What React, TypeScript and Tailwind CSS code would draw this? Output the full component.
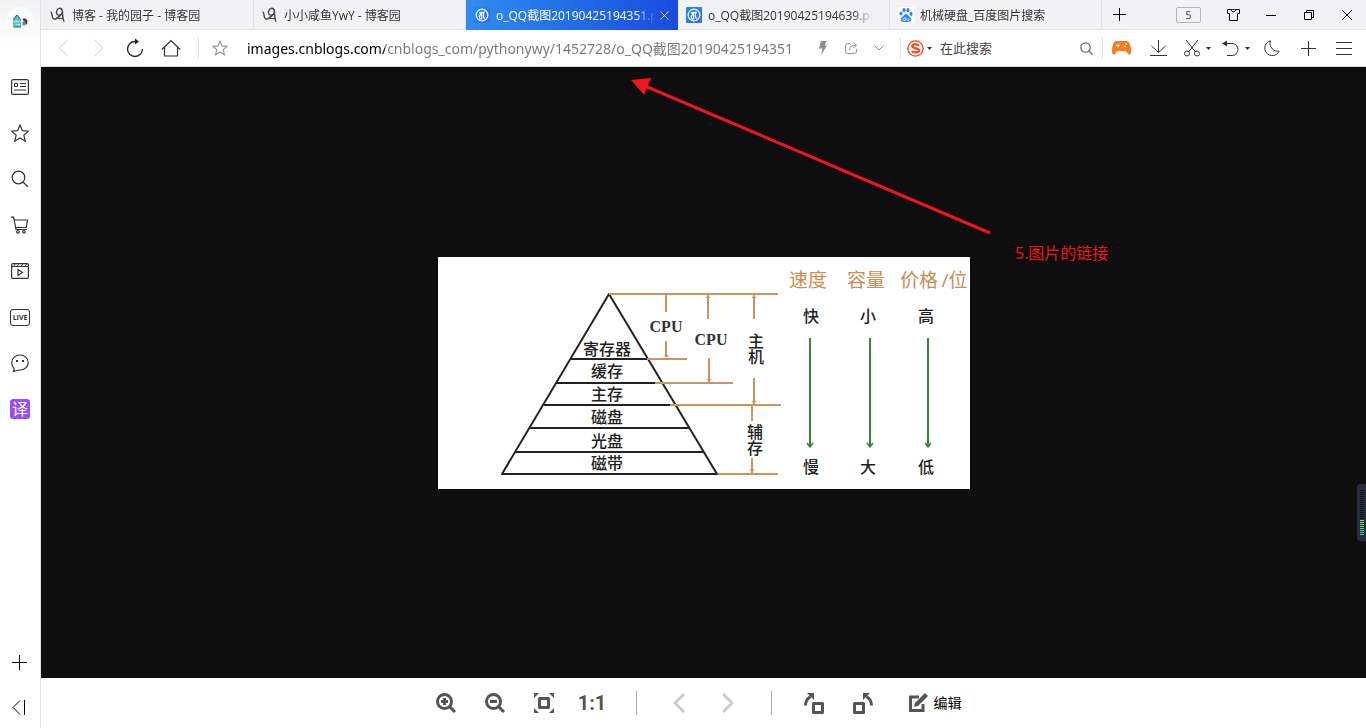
import { useState } from 'react'
import type { ReactNode } from 'react'

type IconProps = {
  w?: number
  h?: number
  sw?: number
  className?: string
  children: ReactNode
}

function Icon({ w = 20, h = 20, sw = 1, className = '', children }: IconProps) {
  return (
    <svg
      width={w}
      height={h}
      viewBox={`0 0 ${w} ${h}`}
      fill="none"
      stroke="currentColor"
      strokeWidth={sw}
      className={`shrink-0 ${className}`}
      aria-hidden="true"
    >
      {children}
    </svg>
  )
}

// Favicons

function CnblogsIcon() {
  return (
    <Icon w={16} h={16} sw={1.5} className="text-[#4a4a4a]">
      <path d="M0.500 5c1 0 1.200 1 1.500 3 .4 2.500 1 4.200 2.700 4.200C6.500 12.200 9 9.500 11.800 7" />
      <path d="M12.300 4.500c0 2-1.400 3.700-3.200 3.700S6.300 7 6.500 5.200 8 1.200 9.800 1.200s2.500 1.300 2.600 3.300c.1 3.500.3 7 1.600 10.200" />
      <path d="M7.500 11.500h5.300" strokeWidth={1.200} />
    </Icon>
  )
}

function ImageTabIcon() {
  return (
    <Icon w={16} h={16} className="text-white">
      <rect width="16" height="16" rx="1" fill="#1a86f7" stroke="none" />
      <path d="M16 0v16H0z" fill="#3d63f2" stroke="none" opacity=".6" />
      <circle cx="8" cy="8" r="5.800" strokeWidth={1.300} />
      <path d="M5 5.800l6-.6M8.500 5.500L5.800 8.500M9.500 5.500v3c0 1.500.3 3 1.200 3.500M5.500 8.200v2.500c0 1 .8 1.500 2.200 1V7.500" strokeWidth={1.200} />
    </Icon>
  )
}

function BaiduIcon() {
  return (
    <Icon w={16} h={16} className="text-[#2f86f6]">
      <rect width="16" height="16" fill="#ffffff" stroke="none" />
      <g fill="currentColor" stroke="none">
        <ellipse cx="3" cy="6.500" rx="1.600" ry="2.100" />
        <ellipse cx="6" cy="3.200" rx="1.600" ry="2.100" />
        <ellipse cx="10" cy="3.200" rx="1.600" ry="2.100" />
        <ellipse cx="13" cy="6.800" rx="1.600" ry="2.100" />
        <path d="M8 7c1.800 0 2.300 1.700 3.500 2.800 1.300 1.200 2.200 2.300 1.500 3.900-.7 1.500-2.700 1.300-5 1.300s-4.300.2-5-1.300c-.7-1.600.2-2.700 1.500-3.900C5.700 8.700 6.200 7 8 7z" />
      </g>
      <path d="M7.300 10v3.500H6a1.100 1.100 0 010-2.200h1.300M8.800 11.300v1.300c0 .6.400.9.900.9h1.200v-2.200" stroke="#ffffff" strokeWidth={0.700} />
    </Icon>
  )
}

const TABS = [
  { title: '博客 - 我的园子 - 博客园', icon: <CnblogsIcon />, active: false },
  { title: '小小咸鱼YwY - 博客园', icon: <CnblogsIcon />, active: false },
  { title: 'o_QQ截图20190425194351.png', icon: <ImageTabIcon />, active: true },
  { title: 'o_QQ截图20190425194639.png', icon: <ImageTabIcon />, active: false },
  { title: '机械硬盘_百度图片搜索', icon: <BaiduIcon />, active: false },
]

function Caret() {
  return (
    <Icon w={5} h={3}>
      <path d="M0 0h5L2.500 3z" fill="currentColor" stroke="none" />
    </Icon>
  )
}

function TabBar() {
  return (
    <div className="flex h-[30px] border-b border-[#e2e2e5] bg-[#f2f2f5] pl-px">
      {TABS.map((tab) => (
        <div
          key={tab.title}
          className={
            tab.active
              ? '-mb-px flex w-[212px] items-center bg-linear-to-r from-[#338bee] to-[#1b4ae0] pr-[9px] pl-2 text-white'
              : 'flex w-[212px] items-center border-r border-[#e2e2e5] pr-4 pl-2 text-[#333333]'
          }
        >
          <a href="#" className="flex min-w-0 flex-1 items-center gap-1.5">
            {tab.icon}
            <span className="flex-1 overflow-hidden pt-0.5 text-xs leading-5 whitespace-nowrap [mask-image:linear-gradient(to_right,black_calc(100%-20px),transparent)]">
              {tab.title}
            </span>
          </a>
          {tab.active && (
            <button aria-label="关闭标签" className="ml-1 flex h-4 w-[9px] items-center justify-center">
              <Icon w={9} h={9}>
                <path d="M.5.500l8 8M8.500.500l-8 8" />
              </Icon>
            </button>
          )}
        </div>
      ))}
      <button aria-label="新建标签" className="flex w-[35px] items-center justify-center text-black">
        <Icon w={13} h={13}>
          <path d="M6.500 0v13M0 6.500h13" />
        </Icon>
      </button>
      <div className="ml-auto flex items-center text-black">
        <button className="mr-[13px] flex h-4 w-[25px] items-center justify-center rounded-xs border border-[#b5b5b8] text-[11px] leading-4 text-[#444444]">
          5
        </button>
        <button aria-label="皮肤" className="flex h-full w-[38px] items-center justify-center">
          <Icon w={13} h={12}>
            <path d="M.5.500h3.500c.2 1.400 1.100 2.200 2.500 2.200S8.800 1.900 9 .5h3.500v4h-2v7h-8v-7h-2z" />
            <path d="M4 .5h5" strokeWidth={0.800} />
          </Icon>
        </button>
        <button aria-label="最小化" className="flex h-full w-[38px] items-center justify-center">
          <Icon w={10} h={2}>
            <path d="M0 1.500h10" />
          </Icon>
        </button>
        <button aria-label="还原" className="flex h-full w-[38px] items-center justify-center">
          <Icon w={10} h={10}>
            <path d="M.5 2.500h7v7h-7zM2.500 2.500v-2h7v7h-2" />
          </Icon>
        </button>
        <button aria-label="关闭" className="flex h-full w-[38px] items-center justify-center">
          <Icon w={10} h={10}>
            <path d="M0 0l10 10M10 0L0 10" />
          </Icon>
        </button>
      </div>
    </div>
  )
}

function AddressBar() {
  const [url, setUrl] = useState(
    'images.cnblogs.com/cnblogs_com/pythonywy/1452728/o_QQ截图20190425194351'
  )

  return (
    <div className="flex h-[37px] items-center border-b border-[#d9dcdd] bg-white pr-1 pl-1 text-[#333333]">
      <button aria-label="后退" className="flex h-full w-9 items-center justify-center text-[#cfcfcf]">
        <Icon w={10} h={18}>
          <path d="M9.500 1L1 9l8.500 8" />
        </Icon>
      </button>
      <button aria-label="前进" className="flex h-full w-9 items-center justify-center text-[#cfcfcf]">
        <Icon w={10} h={18}>
          <path d="M.5 1L9 9 .5 17" />
        </Icon>
      </button>
      <button aria-label="刷新" className="flex h-full w-9 items-center justify-center text-[#222222]">
        <Icon w={18} h={20} sw={1.300}>
          <path d="M11 3.500H9a7.500 7.500 0 107.500 7.500" />
          <path d="M9 .5l4 3L9 6.500z" fill="currentColor" stroke="none" />
        </Icon>
      </button>
      <button aria-label="主页" className="flex h-full w-9 items-center justify-center">
        <Icon w={20} h={18} sw={1.200}>
          <path d="M.8 10.500L10 1.500l9.200 9M3.500 8.500v8.500h13V8.500" />
        </Icon>
      </button>
      <span className="ml-[9px] h-[22px] w-px bg-[#e0e0e0]" />
      <button aria-label="收藏" className="flex h-full w-[42px] items-center justify-center text-[#999999]">
        <Icon w={16} h={16} sw={1.200}>
          <path d="M8 1.200l2 4.700 5 .4-3.800 3.400 1.200 5L8 12l-4.400 2.700 1.200-5L1 6.300l5-.4z" />
        </Icon>
      </button>
      <input
        aria-label="地址"
        value={url}
        onChange={(e) => setUrl(e.target.value)}
        className="h-[30px] min-w-0 flex-1 bg-linear-to-r from-black from-[144px] to-[#777777] to-[144px] bg-clip-text px-1.5 font-['Noto_Sans','Noto_Sans_CJK_SC',sans-serif] text-sm leading-5 text-[#777777] outline-none [-webkit-text-fill-color:transparent]"
      />
      <button aria-label="极速模式" className="flex h-full w-7 items-center justify-center text-[#8f8f8f]">
        <Icon w={8} h={14}>
          <path d="M2 0h5.500L5.800 4.500H8L2.200 14l1.200-6.500H0z" fill="currentColor" stroke="none" />
        </Icon>
      </button>
      <button aria-label="分享" className="flex h-full w-7 items-center justify-center text-[#8f8f8f]">
        <Icon w={12} h={12}>
          <path d="M5 1.500H2.500a2 2 0 00-2 2v6a2 2 0 002 2h7a2 2 0 002-2V7M4.500 8c.3-3 2-4.700 6.500-4.700M8.500.500l3 2.800-3 2.700" />
        </Icon>
      </button>
      <button aria-label="更多" className="flex h-full w-7 items-center justify-center text-[#8f8f8f]">
        <Icon w={10} h={6}>
          <path d="M.5.500L5 5 9.500.500" />
        </Icon>
      </button>
      <span className="ml-[7px] h-[22px] w-px bg-[#e0e0e0]" />
      <div className="flex h-full w-[201px] items-center pr-[9px] pl-1.5">
        <button aria-label="切换搜索引擎" className="flex h-full items-center gap-[3px]">
          <Icon w={17} h={17} className="text-[#f4481d]">
            <circle cx="8.500" cy="8.500" r="7.600" strokeWidth={1.400} />
            <path d="M12.200 5.300C9.500 4 5.200 4 5.200 6.300c0 2.500 6.800 1.700 6.800 4.300 0 2.300-4.500 2.300-7.300.9" strokeWidth={2.200} />
          </Icon>
          <Caret />
        </button>
        <input
          aria-label="搜索"
          placeholder="在此搜索"
          className="ml-2 min-w-0 flex-1 text-[13px] leading-5 outline-none placeholder:text-[#444444]"
        />
        <button aria-label="搜索" className="flex h-full items-center text-[#666666]">
          <Icon w={13} h={13} sw={1.200}>
            <circle cx="5.500" cy="5.500" r="4.700" />
            <path d="M9 9l3.600 3.600" />
          </Icon>
        </button>
      </div>
      <span className="h-[22px] w-px bg-[#e0e0e0]" />
      <button aria-label="游戏" className="flex h-full w-[37px] items-center justify-center">
        <Icon w={19} h={14}>
          <path
            d="M5 0h9c3 0 4.200 2.500 4.800 7 .4 3.500.4 6.500-1.500 6.500-2 0-2.300-3.500-4.300-3.500H6c-2 0-2.300 3.500-4.300 3.500C-.200 13.500-.200 10.500.200 7 .800 2.500 2 0 5 0z"
            fill="#fa7a21"
            stroke="none"
          />
          <path d="M6 2.500v4M4 4.500h4" stroke="#ffffff" />
          <path d="M12 5.500h1.500M13.500 3H15" stroke="#ffffff" strokeWidth={1.500} />
        </Icon>
      </button>
      <button aria-label="下载" className="flex h-full w-[37px] items-center justify-center">
        <Icon w={17} h={16}>
          <path d="M8.500 0v12.500M1.500 6l7 6.500 7-6.500M0 15.500h17" />
        </Icon>
      </button>
      <button aria-label="截图" className="flex h-full w-[41px] items-center justify-center gap-1.5">
        <Icon w={16} h={17}>
          <path d="M2 0l9.500 12M14 0L4.500 12" />
          <circle cx="3" cy="13.500" r="2.500" />
          <circle cx="13" cy="13.500" r="2.500" />
        </Icon>
        <Caret />
      </button>
      <button aria-label="撤销" className="flex h-full w-9 items-center justify-center gap-1.5">
        <Icon w={17} h={16}>
          <path d="M2 3.500h8a6 6 0 010 12H5" />
          <path d="M0 3.500L5 .5v6z" fill="currentColor" stroke="none" />
        </Icon>
        <Caret />
      </button>
      <button aria-label="夜间模式" className="flex h-full w-9 items-center justify-center">
        <Icon w={16} h={16}>
          <path d="M6.500.800a7.500 7.500 0 108.600 10.300A7.800 7.800 0 016.500.800z" />
        </Icon>
      </button>
      <button aria-label="添加" className="flex h-full w-9 items-center justify-center">
        <Icon w={15} h={15}>
          <path d="M7.500 0v15M0 7.500h15" />
        </Icon>
      </button>
      <button aria-label="菜单" className="flex h-full w-9 items-center justify-center">
        <Icon w={16} h={13}>
          <path d="M0 .5h16M0 6.500h16M0 12.500h16" />
        </Icon>
      </button>
    </div>
  )
}

const SIDE_ITEMS = [
  {
    label: '资讯',
    icon: (
      <Icon w={18} h={16} sw={1.200}>
        <rect x=".6" y=".6" width="16.800" height="14.800" rx="1.500" />
        <path d="M3.500 4.500h3v3h-3zM9 4.500h6M9 7.500h6M3 11h12" strokeWidth={1} />
      </Icon>
    ),
  },
  {
    label: '收藏夹',
    icon: (
      <Icon w={18} h={18} sw={1.200}>
        <path d="M9 1l2.400 5.700 6.100.5-4.700 4 1.500 6L9 13.900l-5.300 3.300 1.500-6-4.700-4 6.100-.5z" />
      </Icon>
    ),
  },
  {
    label: '搜索',
    icon: (
      <Icon w={18} h={18} sw={1.200}>
        <circle cx="7.500" cy="7.500" r="6.300" />
        <path d="M12 12l5 5" />
      </Icon>
    ),
  },
  {
    label: '购物',
    icon: (
      <Icon w={18} h={18} sw={1.200}>
        <path d="M0 1.200h2.600L5 13.500h11M3.500 4h13l-1.200 7.500H5" />
        <circle cx="7" cy="15.800" r="1.300" />
        <circle cx="13" cy="15.800" r="1.300" />
      </Icon>
    ),
  },
  {
    label: '视频',
    icon: (
      <Icon w={18} h={16} sw={1.200}>
        <rect x=".6" y=".6" width="16.800" height="14.800" rx="1.200" />
        <path d="M1 3.500h16M6 3.500l2-3M10 3.500l2-3M14 3.500l2-3M2.500 3.500l2-3" strokeWidth={1} />
        <path d="M7 6.500l4.500 3L7 12.500z" />
      </Icon>
    ),
  },
  {
    label: '直播',
    icon: (
      <span className="flex h-[17px] w-5 items-center justify-center rounded-[3px] border border-[#333333] text-[7px] leading-none font-bold">
        LIVE
      </span>
    ),
  },
  {
    label: '消息',
    icon: (
      <Icon w={18} h={18} sw={1.200}>
        <path d="M3 14.200A7.500 7.500 0 01.8 8.500C.8 4.200 4.500 1 9 1s8.200 3.200 8.200 7.500S13.500 16 9 16c-2 0-3.300.8-6.500 1.300.7-1 .8-2 .5-3.100z" />
        <path d="M5 7h2M11 7h2" strokeWidth={2} />
      </Icon>
    ),
  },
  {
    label: '翻译',
    icon: (
      <span className="flex size-5 items-center justify-center rounded-[3px] bg-[#9a4bfb] text-base leading-5 text-white">
        译
      </span>
    ),
  },
]

function Sidebar() {
  return (
    <aside className="flex w-[41px] shrink-0 flex-col items-center border-r border-[#e0e0e0] bg-linear-to-b from-[#f2f2f5] to-white to-[45px] text-[#333333]">
      <button aria-label="账号" className="mt-[7px] mb-[29px] flex size-7 items-center justify-center rounded-full bg-[#f8fdf6]">
        <Icon w={16} h={16}>
          <path d="M1 6.500C1 5 3.500 4 4 2h2c.5 2 3 3 3 4.500V14H1z" fill="#62c4d2" stroke="none" />
          <path d="M1.500 6.500L5 2l3.500 4.500M1.500 14h7.500" stroke="#46564f" />
          <path d="M2.500 8.500h4M4.500 11.500H8" stroke="#c9f3f5" />
          <path d="M10.500 5.500h3l2 2-.5 4h-1.500l-.5-3-2-1z" fill="#7a2220" stroke="none" />
          <path d="M10.500 8.500h2.500v4h-2.500z" fill="#3c8ea4" stroke="none" />
        </Icon>
      </button>
      {SIDE_ITEMS.map((item) => (
        <button key={item.label} aria-label={item.label} className="flex h-[46px] w-full items-center justify-center">
          {item.icon}
        </button>
      ))}
      <button aria-label="添加" className="mt-auto flex h-12 w-full items-center justify-center pr-px text-black">
        <Icon w={15} h={15}>
          <path d="M7.500 0v15M0 7.500h15" />
        </Icon>
      </button>
      <button aria-label="收起" className="flex h-[42px] w-full items-center justify-center pr-0.5 text-black">
        <Icon w={14} h={15}>
          <path d="M8 .5l-7 7 7 7M12.500 0v15" />
        </Icon>
      </button>
    </aside>
  )
}

const LEVELS = [
  { name: '寄存器', y: 98 },
  { name: '缓存', y: 120 },
  { name: '主存', y: 143 },
  { name: '磁盘', y: 166 },
  { name: '光盘', y: 190 },
  { name: '磁带', y: 212 },
]

const TRENDS = [
  { from: '快', to: '慢', x: 373, line: 372 },
  { from: '小', to: '大', x: 430, line: 432 },
  { from: '高', to: '低', x: 488, line: 490 },
]

function StorageDiagram() {
  return (
    <svg
      viewBox="0 0 532 232"
      className="w-[532px] max-w-full bg-white"
      role="img"
      aria-label="存储器层次结构"
      fill="none"
      textAnchor="middle"
    >
      <g stroke="#222222" strokeWidth="2">
        <path d="M171 37L64 217h215z" strokeLinejoin="round" />
        <path d="M132 102h78M118 126h100M106 148h126M92 171h159M77 195h188" />
      </g>
      <g stroke="#cb9461" strokeWidth="2">
        <path d="M171 37h169M209 102h40M217 126h78M232 148h111M280 217h60" />
        <path d="M228 37v18M228 84v16M270 37v25M271 101v24M316 37v25M316 121v26M314 149v15M314 201v15" />
      </g>
      <path
        d="M226 98h5l-2.500 3zM268.500 122h5l-2.500 3zM313.500 144h5l-2.500 3zM311.500 212h5l-2.500 4zM267.500 41h5l-2.500-3zM313.500 41h5l-2.500-3z"
        fill="#cb9461"
      />
      <g fill="#222222" className="text-base font-medium">
        {LEVELS.map((level) => (
          <text key={level.name} x="169" y={level.y}>
            {level.name}
          </text>
        ))}
        <text x="317" y="92" className="[writing-mode:vertical-rl]">主机</text>
        <text x="316" y="183" className="[writing-mode:vertical-rl]">辅存</text>
        {TRENDS.map((t) => (
          <g key={t.from}>
            <text x={t.x} y="65">{t.from}</text>
            <text x={t.x} y="216">{t.to}</text>
          </g>
        ))}
      </g>
      <g fill="#333333" className="font-['Liberation_Serif',serif] text-base font-bold">
        <text x="228" y="75">CPU</text>
        <text x="273" y="88">CPU</text>
      </g>
      <g fill="#c98d55" className="text-[19px]">
        <text x="370" y="30">速度</text>
        <text x="428" y="30">容量</text>
        <text x="481" y="30">价格</text>
        <text x="507" y="30">/</text>
        <text x="520" y="30">位</text>
      </g>
      {TRENDS.map((t) => (
        <g key={t.to} stroke="#37853a" strokeWidth="2">
          <path d={`M${t.line} 81v108`} />
          <path d={`M${t.line - 3} 186l3 4 3-4`} strokeWidth="1.500" />
        </g>
      ))}
    </svg>
  )
}

function LevelMeter() {
  const bars = Array.from({ length: 23 }, (_, i) => i)
  return (
    <svg width="9" height="58" viewBox="0 0 9 58" className="absolute top-[417px] right-0" aria-hidden="true">
      <path d="M2 0h7v57H2l-2-2V2z" fill="#272b3a" />
      {bars.map((i) => (
        <rect
          key={i}
          x="3"
          y={6 + i * 2}
          width="4"
          height="1"
          fill={i < 15 ? '#11141d' : i < 18 ? '#8edb55' : i < 20 ? '#5bdc86' : '#2fd9a5'}
        />
      ))}
    </svg>
  )
}

function Viewer() {
  return (
    <main className="relative flex flex-1 items-center justify-center bg-[#0e0e0e]">
      <StorageDiagram />
      <div className="absolute top-[11px] left-[590px] flex text-[#ee151b]">
        <svg width="361" height="157" viewBox="0 0 361 157" aria-hidden="true">
          <path d="M14 8l345 147" stroke="currentColor" strokeWidth="3" />
          <path d="M0 2l20-2-7 17z" fill="currentColor" />
        </svg>
        <p className="mt-[163px] ml-[23px] text-base leading-6 whitespace-nowrap">5.图片的链接</p>
      </div>
      <LevelMeter />
    </main>
  )
}

function ImageToolbar() {
  return (
    <div className="flex h-[50px] items-center justify-center bg-white pr-1 text-[#555555]">
      <button aria-label="放大" className="flex h-full w-[49px] items-center justify-center">
        <Icon w={20} h={20} sw={3}>
          <circle cx="8.500" cy="8.500" r="7" />
          <path d="M13.500 13.500l5.500 5.500M8.500 5v7M5 8.500h7" />
        </Icon>
      </button>
      <button aria-label="缩小" className="flex h-full w-[49px] items-center justify-center">
        <Icon w={20} h={20} sw={3}>
          <circle cx="8.500" cy="8.500" r="7" />
          <path d="M13.500 13.500l5.500 5.500M5 8.500h7" />
        </Icon>
      </button>
      <button aria-label="适应窗口" className="flex h-full w-12 items-center justify-center">
        <Icon w={20} h={20}>
          <path d="M0 0h5L0 5zM20 0v5l-5-5zM0 20v-5l5 5zM20 20h-5l5-5z" fill="currentColor" stroke="none" />
          <rect x="5.500" y="5.500" width="9" height="9" strokeWidth={3} strokeLinejoin="round" />
        </Icon>
      </button>
      <button className="h-full w-[49px] font-['Liberation_Sans_Narrow',Roboto,sans-serif] text-xl leading-6 font-bold">
        1:1
      </button>
      <span className="mr-[18px] ml-[19px] h-6 w-px bg-[#aaaaaa]" />
      <button aria-label="上一张" className="flex h-full w-[49px] items-center justify-center text-[#cccccc]">
        <Icon w={12} h={20} sw={3}>
          <path d="M11 1l-9 9 9 9" />
        </Icon>
      </button>
      <button aria-label="下一张" className="flex h-full w-[49px] items-center justify-center text-[#cccccc]">
        <Icon w={12} h={20} sw={3}>
          <path d="M1 1l9 9-9 9" />
        </Icon>
      </button>
      <span className="mx-[18px] h-6 w-px bg-[#aaaaaa]" />
      <button aria-label="向左旋转" className="flex h-full w-[49px] items-center justify-center">
        <Icon w={20} h={22}>
          <rect x="9.500" y="11.500" width="9" height="9" strokeWidth={3} strokeLinejoin="round" />
          <path d="M1.500 13.500c0-4 1.500-7 5-9" strokeWidth={3} />
          <path d="M3 1h7v7z" fill="currentColor" stroke="none" />
        </Icon>
      </button>
      <button aria-label="向右旋转" className="flex h-full w-[49px] items-center justify-center">
        <Icon w={20} h={22}>
          <rect x="1.500" y="11.500" width="9" height="9" strokeWidth={3} strokeLinejoin="round" />
          <path d="M18.500 13.500c0-4-1.500-7-5-9" strokeWidth={3} />
          <path d="M17 1h-7v7z" fill="currentColor" stroke="none" />
        </Icon>
      </button>
      <button className="flex h-full items-center gap-1.5 px-5 text-sm leading-5 text-black">
        <Icon w={20} h={20} className="text-[#555555]">
          <path d="M11 4H2.500v13.500H15V11" strokeWidth={3} />
          <path d="M6 14l1-4L17 0l3 3-10 10z" fill="currentColor" stroke="none" />
        </Icon>
        编辑
      </button>
    </div>
  )
}

export default function App() {
  return (
    <div className="flex min-h-screen font-['Open_Sans','Noto_Sans_CJK_SC',sans-serif]">
      <Sidebar />
      <div className="flex min-w-0 flex-1 flex-col">
        <TabBar />
        <AddressBar />
        <Viewer />
        <ImageToolbar />
      </div>
    </div>
  )
}
